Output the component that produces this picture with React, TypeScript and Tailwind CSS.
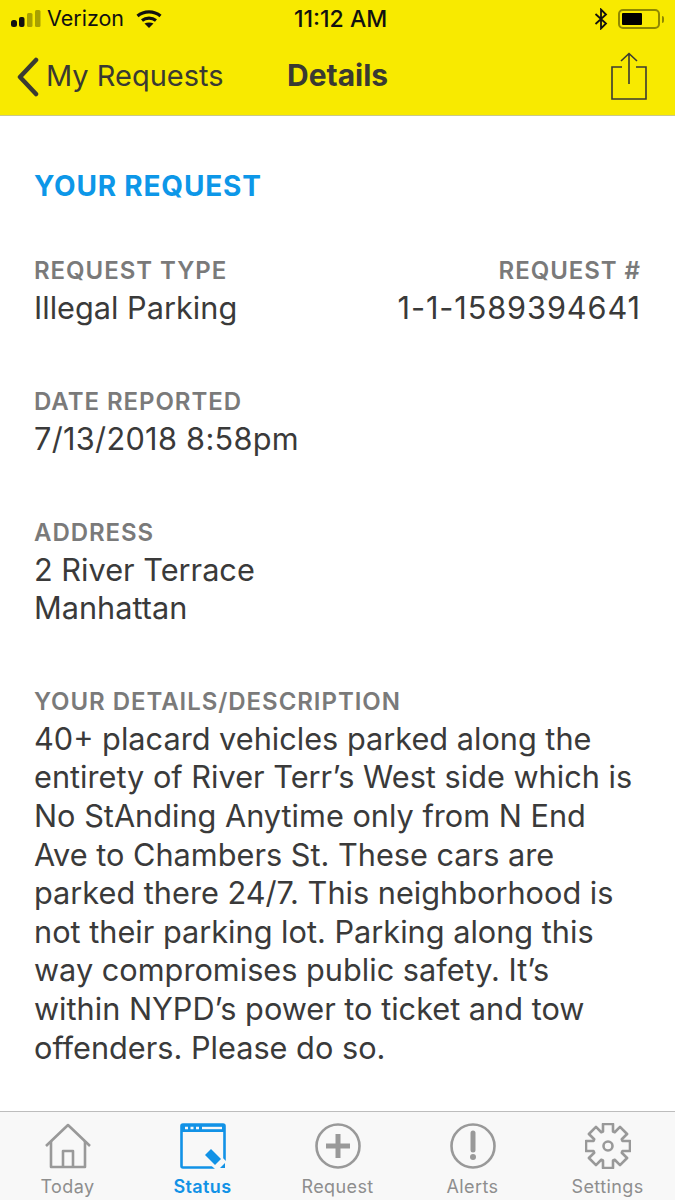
import type { ReactNode } from 'react';

const font = { fontFamily: 'Inter, "Liberation Sans", sans-serif' };

// 8 tooth cog, center 23/23
function gearPath() {
  const outer = 22;
  const inner = 14.5;
  const half = 5;
  let d = '';
  for (let i = 0; i < 8; i++) {
    const a = (i * Math.PI) / 4;
    const pt = (along: number, side: number) =>
      `${(23 + along * Math.sin(a) + side * Math.cos(a)).toFixed(2)} ${(23 - along * Math.cos(a) + side * Math.sin(a)).toFixed(2)}`;
    d += `${i === 0 ? 'M' : 'L'}${pt(inner, -half)} L${pt(outer, -half)} L${pt(outer, half)} L${pt(inner, half)} `;
  }
  return d + 'Z';
}

function Field({ label, children, right }: { label: string; children: ReactNode; right?: boolean }) {
  return (
    <div className={right ? 'text-right' : ''}>
      <div className="text-[24px] leading-[37px] font-semibold text-[#7a7a7a] tracking-[0.95px]">{label}</div>
      <div className="text-[30.7px] leading-[38.6px] text-[#3a3a3a]">{children}</div>
    </div>
  );
}

function Tab({ label, active, children }: { label: string; active?: boolean; children: ReactNode }) {
  return (
    <div className="flex-1 flex flex-col items-center">
      <div className="h-[48px] flex items-center justify-center">{children}</div>
      <div className={`mt-[6px] text-[18px] leading-[22px] tracking-[0.4px] ${active ? 'text-[#1292e6] font-semibold' : 'text-[#8e8e8e]'}`}>{label}</div>
    </div>
  );
}

export default function App() {
  return (
    <div style={font} className="w-[675px] h-[1200px] flex flex-col bg-white overflow-hidden">
      {/* Header */}
      <header className="h-[116px] shrink-0 bg-[#f8ea00] border-b border-[#c9c98a]">
        <div className="h-[38px] px-[11px] flex items-center justify-between relative text-[#111]">
          <div className="flex items-center">
            <svg width="30" height="18" viewBox="0 0 30 18">
              <rect x="0" y="10" width="6" height="7" rx="2.5" fill="#111" />
              <rect x="8" y="7" width="5.5" height="10" rx="2" fill="#111" />
              <rect x="16" y="3" width="5.5" height="14" rx="1.5" fill="#a8a000" />
              <rect x="24" y="0" width="5.5" height="17" rx="1.5" fill="#a8a000" />
            </svg>
            <span className="ml-[6px] text-[21.5px] leading-none">Verizon</span>
            <svg className="ml-[12px]" width="26" height="18" viewBox="0 0 26 18" fill="none" stroke="#111" strokeWidth="3.2">
              <path d="M1.5 6 C8 0.5 18 0.5 24.5 6" />
              <path d="M6 10.5 C10 7.3 16 7.3 20 10.5" />
              <path d="M13 18 L8.5 13.5 C11 12 15 12 17.5 13.5 Z" fill="#111" stroke="none" />
            </svg>
          </div>
          <div className="absolute left-[294px] top-[7px] text-[23px] leading-[24px] font-medium">11:12 AM</div>
          <div className="flex items-center">
            <svg width="14" height="22" viewBox="0 0 14 22" fill="none" stroke="#111" strokeWidth="1.8">
              <path d="M1.5 6 L12 15.5 L7 20.5 V1.5 L12 6.5 L1.5 16" />
            </svg>
            <div className="ml-[10px] w-[42px] h-[20px] rounded-[5px] border-2 border-[#8f8800] p-[2px]">
              <div className="w-[20px] h-full bg-black rounded-[1px]" />
            </div>
            <div className="ml-[2px] w-[2px] h-[7px] bg-[#8f8800] rounded-r-sm" />
          </div>
        </div>
        <div className="h-[77px] px-[16px] flex items-center justify-between relative text-[#3a3a32]">
          <div className="flex items-center">
            <svg width="24" height="40" viewBox="0 0 24 40" fill="none" stroke="#3a3a32" strokeWidth="4.5" strokeLinecap="round" strokeLinejoin="round">
              <path d="M20 3 L4 20 L20 37" />
            </svg>
            <span className="ml-[6px] -mt-[2px] text-[29px] leading-none">My Requests</span>
          </div>
          <div className="absolute left-[287px] top-[18px] text-[30px] leading-[38px] font-bold">Details</div>
          <svg className="mr-[12px] -mt-[2px]" width="36" height="48" viewBox="0 0 36 48" fill="none" stroke="#3a3a32" strokeWidth="1.6">
            <path d="M11 15 H1 V47 H35 V15 H25" />
            <path d="M18 32 V2 M10 9 L18 1.5 L26 9" />
          </svg>
        </div>
      </header>

      {/* Content */}
      <main className="flex-1 pl-[34px] pr-[34px] pt-[52px]">
        <h1 className="text-[28px] leading-[36px] font-bold text-[#0d97e8] tracking-[0.8px]">YOUR REQUEST</h1>
        <div className="mt-[48px] flex justify-between">
          <Field label="REQUEST TYPE">Illegal Parking</Field>
          <Field label="REQUEST #" right>
            <span className="tracking-[0.9px]">1-1-1589394641</span>
          </Field>
        </div>
        <div className="mt-[55.5px]">
          <Field label="DATE REPORTED">
            <span className="tracking-[0.3px]">7/13/2018 8:58pm</span>
          </Field>
        </div>
        <div className="mt-[55px]">
          <Field label="ADDRESS">
            2 River Terrace
            <br />
            Manhattan
          </Field>
        </div>
        <div className="mt-[55px]">
          <Field label="YOUR DETAILS/DESCRIPTION">
            40+ placard vehicles parked along the
            <br />
            entirety of River Terr’s West side which is
            <br />
            No StAnding Anytime only from N End
            <br />
            Ave to Chambers St. These cars are
            <br />
            parked there 24/7. This neighborhood is
            <br />
            not their parking lot. Parking along this
            <br />
            way compromises public safety. It’s
            <br />
            within NYPD’s power to ticket and tow
            <br />
            offenders. Please do so.
          </Field>
        </div>
      </main>

      {/* Tab bar */}
      <nav className="h-[89px] shrink-0 bg-[#f8f8f8] border-t border-[#bdbdbd] pt-[10px] flex">
        <Tab label="Today">
          <svg width="46" height="46" viewBox="0 0 46 46" fill="none" stroke="#999" strokeWidth="2.6" strokeLinejoin="round">
            <path d="M1 23 L23 2 L45 23" />
            <path d="M6 18 V44 H40 V18" />
            <path d="M18 44 V28 H28 V44" />
          </svg>
        </Tab>
        <Tab label="Status" active>
          <svg width="46" height="46" viewBox="0 0 46 46" fill="none">
            <rect x="1.5" y="1.5" width="43" height="43" rx="1.5" stroke="#1292e6" strokeWidth="2.6" />
            <rect x="1" y="1" width="44" height="8" fill="#1292e6" />
            <path d="M5 5 H8 M10.5 5 H13.5 M16 5 H19" stroke="#f8f8f8" strokeWidth="2.4" />
            <path d="M22 5 H42" stroke="#f8f8f8" strokeWidth="2.4" />
            <path d="M22 34 L31 24 L46 38 V46 H35 Z" fill="#f8f8f8" />
            <path d="M25 32 L31 26 L41 36 L35 42 Z" fill="#1292e6" />
            <path d="M40 45 L45 40 V45 Z" fill="#1292e6" />
          </svg>
        </Tab>
        <Tab label="Request">
          <svg width="46" height="46" viewBox="0 0 46 46" fill="none">
            <circle cx="23" cy="23" r="21.5" stroke="#999" strokeWidth="2.6" />
            <path d="M23 11 V35 M11 23 H35" stroke="#999" strokeWidth="5" />
          </svg>
        </Tab>
        <Tab label="Alerts">
          <svg width="46" height="46" viewBox="0 0 46 46" fill="none">
            <circle cx="23" cy="23" r="21.5" stroke="#999" strokeWidth="2.6" />
            <path d="M23 10 V27" stroke="#999" strokeWidth="5" strokeLinecap="round" />
            <circle cx="23" cy="34" r="3" fill="#999" />
          </svg>
        </Tab>
        <Tab label="Settings">
          <svg width="46" height="46" viewBox="0 0 46 46" fill="none" stroke="#999" strokeWidth="2.6" strokeLinejoin="round">
            <path d={gearPath()} />
            <circle cx="23" cy="23" r="4.5" />
          </svg>
        </Tab>
      </nav>
    </div>
  );
}
